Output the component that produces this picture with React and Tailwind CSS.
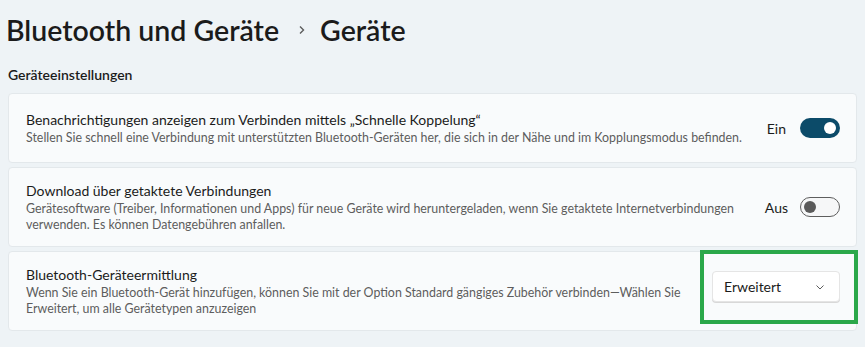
import React from "react";

const font = { fontFamily: 'Lato, "Noto Sans", sans-serif' };

function ToggleOn() {
  return (
    <div className="flex h-[20px] w-[40px] items-center justify-end rounded-full bg-[#0c4b69] px-[4px]">
      <div className="h-[12px] w-[12px] rounded-full bg-white" />
    </div>
  );
}

function ToggleOff() {
  return (
    <div className="flex h-[20px] w-[40px] items-center justify-start rounded-full border border-[#5e5e5e] bg-[#f6f7f8] px-[3px]">
      <div className="h-[12px] w-[12px] rounded-full bg-[#5a5a5a]" />
    </div>
  );
}

function Card({ title, children, right, className = "" }) {
  return (
    <div className={`flex items-center rounded-[4px] border border-[#e3e8eb] bg-[#f9fbfc] pl-[17px] pr-[16px] ${className}`}>
      <div className="flex-1">
        <div className="text-[14px] leading-[20px] text-[#1b1b1b]">{title}</div>
        <div className="text-[12.4px] leading-[16px] text-[#5d5d5d]">{children}</div>
      </div>
      {right}
    </div>
  );
}

export default function App() {
  return (
    <div className="h-[347px] w-[865px] overflow-hidden bg-[#eef3f6] pl-[8px] pr-[8px]" style={font}>
      <div className="flex h-[60px] items-center">
        <span className="ml-[-2px] text-[28.5px] font-semibold leading-[36px] text-[#1b1b1b]">Bluetooth und Geräte</span>
        <svg className="ml-[18px] mr-[13px]" width="10" height="10" viewBox="0 0 10 10">
          <path d="M3 1.5 L6.5 5 L3 8.5" fill="none" stroke="#5c5c5c" strokeWidth="1.4" />
        </svg>
        <span className="text-[28.5px] font-semibold leading-[36px] text-[#1b1b1b]">Geräte</span>
      </div>
      <div className="pt-[5px] pb-[8px] text-[14px] font-semibold leading-[20px] text-[#1b1b1b]">Geräteeinstellungen</div>
      <div className="flex flex-col gap-[4px]">
        <Card
          className="h-[70px]"
          title="Benachrichtigungen anzeigen zum Verbinden mittels „Schnelle Koppelung“"
          right={
            <div className="flex items-center gap-[14px]">
              <span className="text-[14px] text-[#1b1b1b]">Ein</span>
              <ToggleOn />
            </div>
          }
        >
          Stellen Sie schnell eine Verbindung mit unterstützten Bluetooth-Geräten her, die sich in der Nähe und im Kopplungsmodus befinden.
        </Card>
        <Card
          className="h-[80px]"
          title="Download über getaktete Verbindungen"
          right={
            <div className="flex items-center gap-[12px]">
              <span className="text-[14px] text-[#1b1b1b]">Aus</span>
              <ToggleOff />
            </div>
          }
        >
          <div className="max-w-[720px]">
            Gerätesoftware (Treiber, Informationen und Apps) für neue Geräte wird heruntergeladen, wenn Sie getaktete Internetverbindungen verwenden. Es können Datengebühren anfallen.
          </div>
        </Card>
        <Card
          className="h-[80px]"
          title="Bluetooth-Geräteermittlung"
          right={
            <div className="mr-[-18px] mb-[9px] flex h-[74px] w-[158px] items-center border-[4px] border-[#2ba84a] pl-[8px]">
              <div className="flex h-[31px] w-[128px] items-center justify-between rounded-[4px] border border-[#e5e5e5] bg-white pl-[11px] pr-[14px] shadow-[0_1px_0_#d8d8d8]">
                <span className="text-[14px] text-[#1b1b1b]">Erweitert</span>
                <svg width="10" height="10" viewBox="0 0 10 10">
                  <path d="M1.5 3.5 L5 7 L8.5 3.5" fill="none" stroke="#5c5c5c" strokeWidth="1" />
                </svg>
              </div>
            </div>
          }
        >
          <div className="max-w-[680px]">
            Wenn Sie ein Bluetooth-Gerät hinzufügen, können Sie mit der Option Standard gängiges Zubehör verbinden—Wählen Sie Erweitert, um alle Gerätetypen anzuzeigen
          </div>
        </Card>
      </div>
    </div>
  );
}
